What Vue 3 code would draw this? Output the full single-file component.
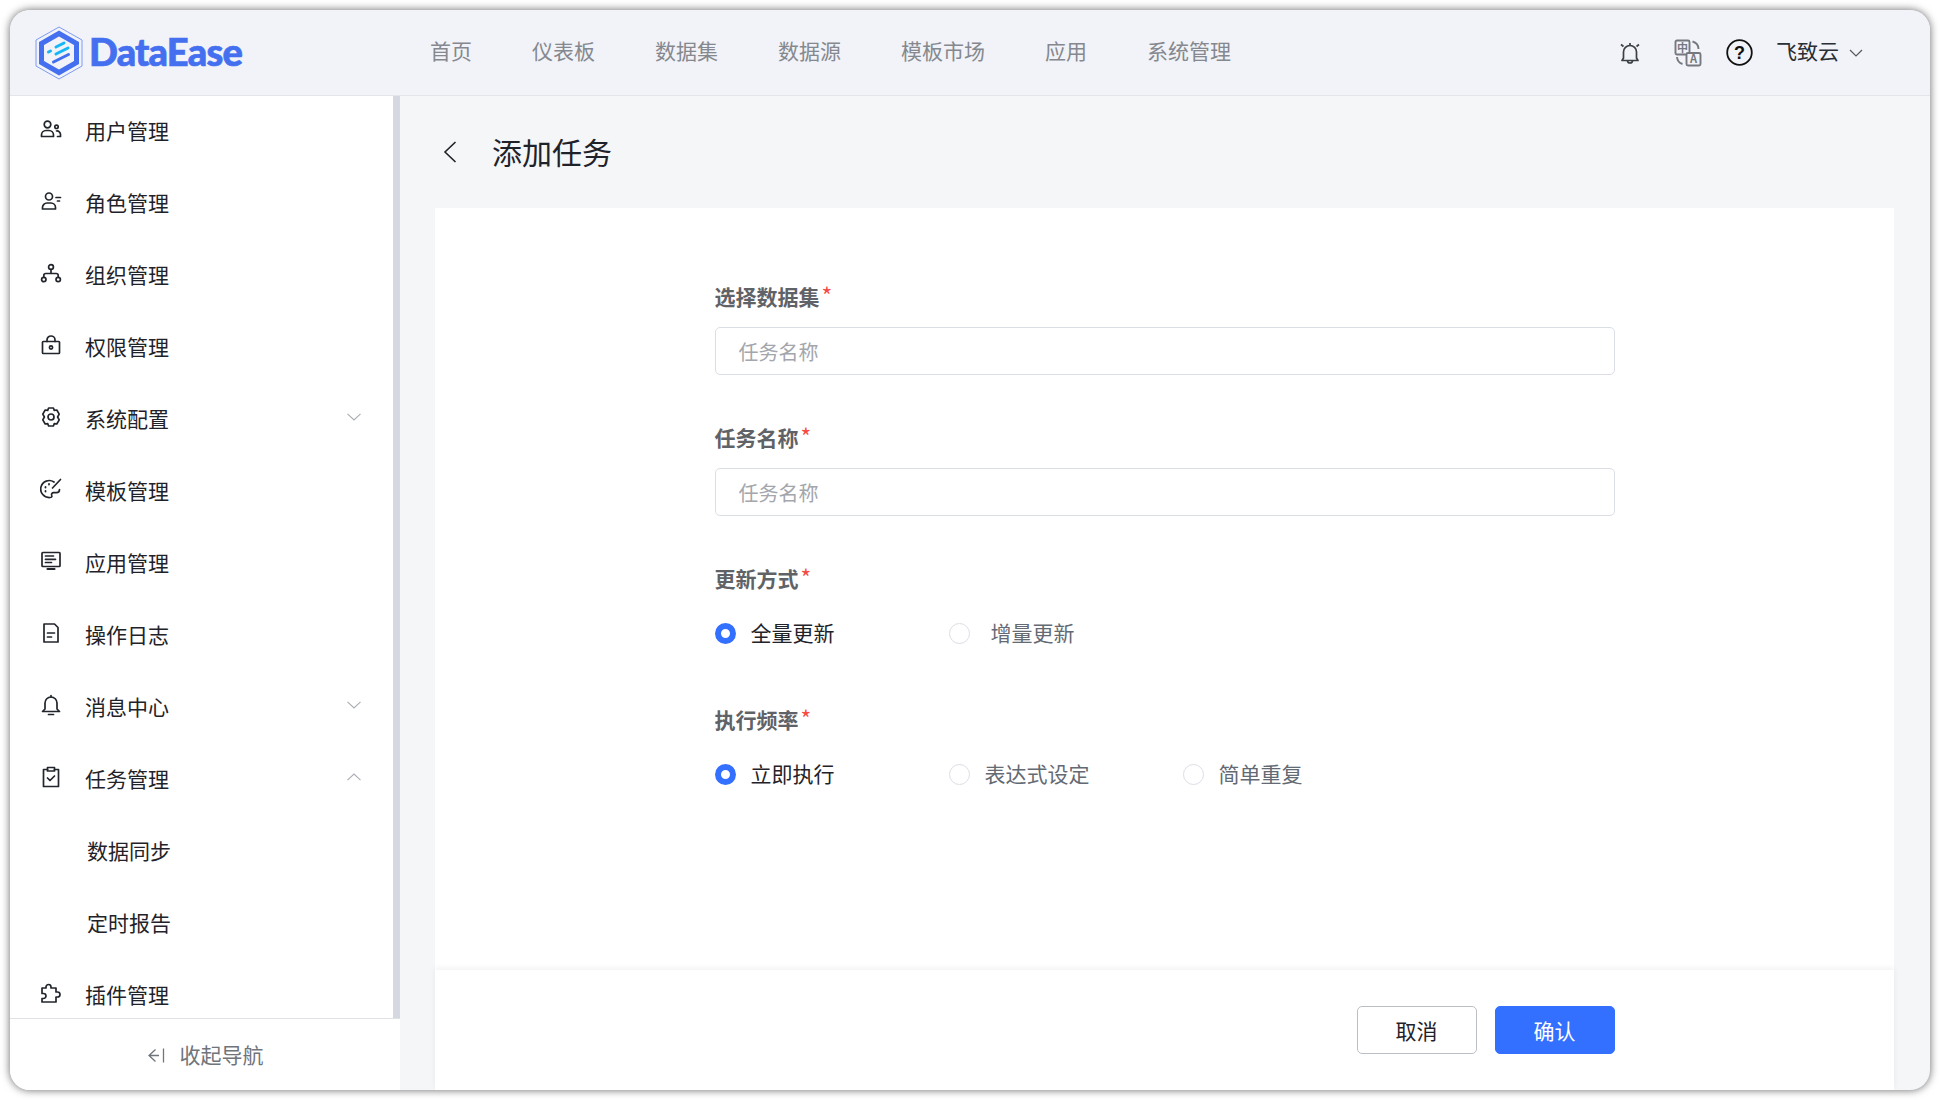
<template>
  <div class="window">
    <!-- header -->
    <header class="top-bar">
      <div class="brand">
        <svg class="brand-mark" viewBox="34 23 50 56" fill="none">
          <polygon points="59,25 82,38 82,64 59,77 36,64 36,38" stroke="#7d9bf6" stroke-width="1" />
          <polygon points="59,31.5 76.5,41.5 76.5,60.5 59,70.5 41.5,60.5 41.5,41.5" stroke="#4470f0" stroke-width="5" />
          <g stroke-linecap="round" stroke-width="3">
            <path d="M56 45l8-4M48.5 50l2-1M56 52l12-6" stroke="#16b7f5" />
            <path d="M53.5 60l15-7.5" stroke="#4470f0" />
          </g>
        </svg>
        <span class="brand-name">DataEase</span>
      </div>
      <nav class="top-nav">
        <a v-for="n in navs" :key="n">{{ n }}</a>
      </nav>
      <div class="top-right">
        <svg class="ic-bell" viewBox="0 0 24 26" fill="none" stroke="#3c4046" stroke-width="1.700">
          <path d="M12 5.500a6.500 6.500 0 0 0-6.500 6.500v6L4 20.500h16L18.500 18v-6A6.500 6.500 0 0 0 12 5.500z" stroke-linejoin="round" />
          <path d="M9.500 20.500a2.500 2.500 0 0 0 5 0M5.500 6.500L3 4.500M18.500 6.500L21 4.500M12 5.500V3" />
        </svg>
        <svg class="ic-lang" viewBox="0 0 28 28" fill="none" stroke="#75797f" stroke-width="1.900">
          <rect x="1.500" y="1.500" width="14" height="14" rx="1.500" />
          <rect x="12.500" y="14" width="14" height="12.500" rx="1.500" fill="#f1f3f8" />
          <path d="M18.500 2.500a8 8 0 0 1 6 7.500M3 18a8 8 0 0 0 5.500 7" />
          <text x="8.500" y="12.500" class="ic-lang-text">中</text>
          <text x="19.500" y="24" class="ic-lang-text">A</text>
        </svg>
        <svg class="ic-help" viewBox="0 0 27 27" fill="none">
          <circle cx="13.500" cy="13.500" r="12.300" stroke="#111" stroke-width="1.800" />
          <text x="13.500" y="19.500" class="ic-help-text">?</text>
        </svg>
        <div class="user">
          <span class="user-name">飞致云</span>
          <svg class="user-arrow" viewBox="0 0 14 8" fill="none" stroke="#55585e" stroke-width="1.200"><path d="M1 1l6 6 6-6" /></svg>
        </div>
      </div>
    </header>

    <div class="body">
      <!-- sidebar -->
      <aside class="side">
        <div class="side-scroll">
          <ul class="menu">
            <li v-for="m in menus" :key="m.name" class="menu-item" :class="{ sub: m.sub }">
              <svg v-if="m.icon" class="menu-icon" viewBox="0 0 22 22" fill="none" stroke="#22262c" stroke-width="1.700" stroke-linejoin="round" stroke-linecap="round" v-html="m.icon"></svg>
              <span>{{ m.name }}</span>
              <svg v-if="m.arrow" class="menu-arrow" :class="{ up: m.arrow === 'up' }" viewBox="0 0 14 8" fill="none" stroke="#a9adb3" stroke-width="1.100"><path d="M.5 .8L7 7l6.500-6.200" /></svg>
            </li>
          </ul>
        </div>
        <div class="collapse">
          <svg class="collapse-icon" viewBox="0 0 18 18" fill="none" stroke="#70747b" stroke-width="1.300"><path d="M8.500 3.500L2 9.500l6.500 6M2 9.500h10M16.500 2.500v14" /></svg>
          <span class="collapse-text">收起导航</span>
        </div>
      </aside>

      <!-- content -->
      <main class="content">
        <div class="page-title">
          <svg class="back" viewBox="0 0 14 22" fill="none" stroke="#1f2329" stroke-width="1.600"><path d="M12.500 1L2 11l10.500 10" /></svg>
          <h1>添加任务</h1>
        </div>
        <section class="card">
          <form class="form" @submit.prevent>
            <div class="field">
              <label>选择数据集<i>*</i></label>
              <input class="text-input" placeholder="任务名称" />
            </div>
            <div class="field">
              <label>任务名称<i>*</i></label>
              <input class="text-input" placeholder="任务名称" />
            </div>
            <div class="field">
              <label>更新方式<i>*</i></label>
              <div class="radios">
                <span class="radio on"><b></b><em>全量更新</em></span>
                <span class="radio loose"><b></b><em>增量更新</em></span>
              </div>
            </div>
            <div class="field">
              <label>执行频率<i>*</i></label>
              <div class="radios">
                <span class="radio on"><b></b><em>立即执行</em></span>
                <span class="radio"><b></b><em>表达式设定</em></span>
                <span class="radio"><b></b><em>简单重复</em></span>
              </div>
            </div>
          </form>
          <footer class="card-foot">
            <div class="foot-inner">
              <button class="btn">取消</button>
              <button class="btn primary">确认</button>
            </div>
          </footer>
        </section>
      </main>
    </div>
  </div>
</template>

<script setup>
const navs = ['首页', '仪表板', '数据集', '数据源', '模板市场', '应用', '系统管理']

const menus = [
  { name: '用户管理', icon: '<circle cx="7.500" cy="6.500" r="3.300"/><path d="M1.500 18.500V17a4.500 4.500 0 0 1 4.500-4.500h3a4.500 4.500 0 0 1 4.500 4.500v1.500z"/><circle cx="16.500" cy="8.800" r="1.700"/><path d="M16.500 13a3.500 3.500 0 0 1 4 3.500v2h-3"/>' },
  { name: '角色管理', icon: '<circle cx="9" cy="6.500" r="3.500"/><path d="M2.500 19v-1.500a4.500 4.500 0 0 1 4.500-4.500h4a4.500 4.500 0 0 1 4.500 4.500V19z"/><path d="M16 7.500h4.500M17.500 11h2"/>' },
  { name: '组织管理', icon: '<circle cx="11" cy="5" r="2.400"/><circle cx="3.800" cy="17.500" r="2.200"/><circle cx="18.200" cy="17.500" r="2.200"/><path d="M11 7.400V11.500M3.800 15.300V13.500a2 2 0 0 1 2-2h10.400a2 2 0 0 1 2 2v1.800"/>' },
  { name: '权限管理', icon: '<rect x="2.500" y="7.500" width="17" height="12" rx=".8"/><path d="M7 7.500V6a4 4 0 0 1 8 0v1.500"/><circle cx="11" cy="13.500" r="1.600"/>' },
  { name: '系统配置', arrow: 'down', icon: '<path d="M8.600 2h4.800l.9 2.400 2.500-.4 2.400 4.100L17.600 11l1.600 2.900-2.400 4.100-2.500-.4-.9 2.400H8.600l-.9-2.400-2.500.4-2.400-4.100L4.400 11 2.800 8.100 5.200 4l2.500.4z"/><circle cx="11" cy="11" r="3"/>' },
  { name: '模板管理', icon: '<path d="M14 4a8.500 8.500 0 1 0-4 15.500c1.800 0 2.200-1 1.700-2.300-.5-1.400.4-2.500 1.800-2.500h3c1.800 0 3-1.200 3-3.200"/><path d="M20.500 1.500L12.500 10"/><path d="M5.500 9v.5M9 6v.5M5.500 13v.5" stroke-width="1.800"/>' },
  { name: '应用管理', icon: '<rect x="2" y="2.500" width="18" height="14" rx=".8"/><path d="M5.500 6h8M5.500 9.300h10M5.500 12.500h6"/><path d="M7.500 19h7" stroke-width="2.200"/>' },
  { name: '操作日志', icon: '<path d="M4 2h10.500L18 5.500V20H4z"/><path d="M7.500 11h7M7.500 15h4"/>' },
  { name: '消息中心', arrow: 'down', icon: '<path d="M11 3a6 6 0 0 0-6 6v6l-2.500 2.500h17L17 15V9a6 6 0 0 0-6-6z"/><path d="M8.500 20.500h5M11 1.500V3"/>' },
  { name: '任务管理', arrow: 'up', icon: '<path d="M7.500 3.500H3.500V20.500h15V3.500h-4"/><rect x="7.500" y="1.500" width="7" height="3.500"/><path d="M7.500 12l2.500 2.500 4.500-4.500"/>' },
  { name: '数据同步', sub: true },
  { name: '定时报告', sub: true },
  { name: '插件管理', icon: '<path d="M6 6V5a2.500 2.500 0 0 1 5 0v1h5v4h1.500a2.500 2.500 0 0 1 0 5H16v5H2v-3.500h1.500a2.500 2.500 0 0 0 0-5H2V6z"/>' }
]
</script>

<style>
html, body { background: #fff; overflow: hidden; }
</style>

<style scoped>
.window {
  width: 1920px;
  height: 1080px;
  margin: 10px;
  border-radius: 20px;
  overflow: hidden;
  display: flex;
  flex-direction: column;
  background: #f5f6f8;
  box-shadow: 0 0 9px rgba(0, 0, 0, 0.6);
  font-family: "Noto Sans CJK SC", "Noto Sans", sans-serif;
  color: #1f2329;
  font-size: 21px;
}

/* header */
.top-bar {
  height: 86px;
  flex: none;
  display: flex;
  align-items: center;
  padding: 0 67px 0 24px;
  box-sizing: border-box;
  background: #f1f3f8;
  border-bottom: 1px solid #e4e5e9;
}
.brand { width: 396px; flex: none; display: flex; align-items: center; gap: 5px; }
.brand-mark { width: 50px; height: 56px; flex: none; }
.brand-name {
  font-family: Lato, "Noto Sans", sans-serif;
  font-weight: 900;
  font-size: 38px;
  line-height: 1;
  letter-spacing: -0.8px;
  color: #4470f0;
  -webkit-text-stroke: 0.7px #4470f0;
  margin-bottom: 4px;
}
.top-nav { display: flex; gap: 60px; color: #85888e; padding-bottom: 6px; }
.top-right { margin-left: auto; display: flex; align-items: center; }
.ic-bell { width: 24px; height: 26px; }
.ic-lang { width: 28px; height: 28px; margin-left: 32px; }
.ic-lang-text { font-size: 11px; font-weight: 700; fill: #75797f; stroke: none; text-anchor: middle; }
.ic-help { width: 27px; height: 27px; margin-left: 24px; }
.ic-help-text { font-size: 18px; font-weight: 700; fill: #111; text-anchor: middle; font-family: "Liberation Sans", sans-serif; }
.user { display: flex; align-items: center; gap: 10px; margin-left: 23px; color: #2a2e35; }
.user-name { padding-bottom: 6px; }
.user-arrow { width: 14px; height: 8px; }

/* sidebar */
.body { flex: 1; min-height: 0; display: flex; }
.side { width: 390px; flex: none; display: flex; flex-direction: column; background: #fff; }
.side-scroll {
  flex: 1;
  min-height: 0;
  overflow: hidden;
  border-right: 7px solid #d5d8e0;
}
.menu { list-style: none; margin: -2px 0 0; padding: 0; }
.menu-item {
  height: 72px;
  display: flex;
  align-items: center;
  padding: 0 32px 0 30px;
}
.menu-item.sub { padding-left: 77px; }
.menu-icon { width: 22px; height: 22px; flex: none; margin-right: 23px; position: relative; top: -1px; }
.menu-arrow { width: 14px; height: 8px; margin-left: auto; position: relative; top: -1px; }
.menu-arrow.up { transform: rotate(180deg); }
.collapse {
  height: 72px;
  flex: none;
  box-sizing: border-box;
  border-top: 1px solid #dfe1e5;
  display: flex;
  align-items: center;
  justify-content: center;
  gap: 15px;
  color: #70747b;
}
.collapse-icon { width: 18px; height: 18px; }
.collapse-text { padding-bottom: 2px; }

/* content */
.content { flex: 1; min-width: 0; display: flex; flex-direction: column; padding: 0 36px 0 35px; }
.page-title { height: 112px; flex: none; display: flex; align-items: center; }
.back { width: 14px; height: 22px; margin-left: 8px; }
.page-title h1 { margin: 0 0 2px 35px; font-size: 30px; font-weight: 400; }
.card { flex: 1; min-height: 0; display: flex; flex-direction: column; background: #fff; }
.form { flex: 1; width: 900px; margin: 0 auto; padding-top: 74px; }
.field { margin-bottom: 48px; }
.field label {
  display: block;
  height: 30px;
  line-height: 28px;
  margin-bottom: 15px;
  font-weight: 700;
  color: #5f6368;
}
.field label i { margin-left: 2px; font-style: normal; font-weight: 400; font-size: 23px; line-height: 1; color: #f54a45; }
.text-input {
  display: block;
  width: 100%;
  height: 48px;
  box-sizing: border-box;
  padding: 0 23px;
  border: 1px solid #dcdee6;
  border-radius: 5px;
  outline: none;
  background: #fff;
  font: inherit;
  font-size: 20px;
}
.text-input::placeholder { color: #a3a6ac; }
.radios { display: flex; height: 48px; align-items: center; }
.radio { width: 234px; display: flex; align-items: center; gap: 15px; color: #646a73; }
.radio.loose { gap: 21px; }
.radio.on { color: #1f2329; }
.radio em { font-style: normal; padding-bottom: 2px; }
.radio b {
  width: 21px;
  height: 21px;
  flex: none;
  box-sizing: border-box;
  border: 1px solid #dcdee6;
  border-radius: 50%;
}
.radio.on b { border: 6.5px solid #3370ff; background: #fff; }
.card-foot { height: 120px; flex: none; background: #fff; box-shadow: 0 -2px 6px rgba(0, 0, 0, 0.06); }
.foot-inner {
  width: 900px;
  margin: 0 auto;
  padding-top: 36px;
  display: flex;
  justify-content: flex-end;
  gap: 18px;
}
.btn {
  width: 120px;
  height: 48px;
  border: 1px solid #bbbfc4;
  border-radius: 5px;
  background: #fff;
  color: #1f2329;
  font: inherit;
  cursor: pointer;
}
.btn.primary { background: #3370ff; border-color: #3370ff; color: #fff; }
</style>
